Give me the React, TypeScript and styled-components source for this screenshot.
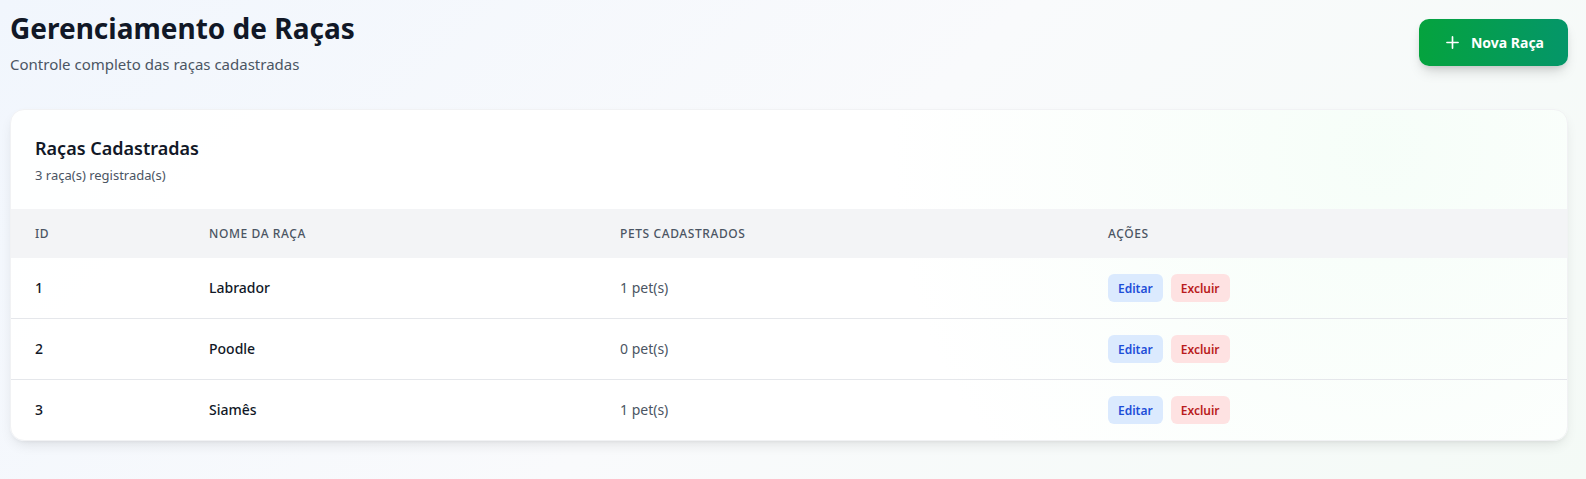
import React from "react";
import styled, { createGlobalStyle } from "styled-components";

const GlobalStyle = createGlobalStyle`
  * { box-sizing: border-box; }
  html, body { margin: 0; padding: 0; }
  body {
    font-family: "Noto Sans", "Open Sans", Arial, sans-serif;
    background: linear-gradient(135deg, #f1f6fd 0%, #f9fafc 50%, #f4faf6 100%);
    min-height: 479px;
    color: #111827;
  }
`;

const Page = styled.div`
  padding: 10px 18px 20px 10px;
`;

const Header = styled.header`
  display: flex;
  justify-content: space-between;
  align-items: center;
  margin-bottom: 35px;
`;

const TitleBlock = styled.div`
  display: flex;
  flex-direction: column;
  gap: 8px;
`;

const Title = styled.h1`
  margin: 0;
  font-size: 28px;
  line-height: 36px;
  font-weight: 700;
  color: #111827;
`;

const Subtitle = styled.p`
  margin: 0;
  font-size: 15px;
  line-height: 20px;
  color: #4b5563;
`;

const PrimaryButton = styled.button`
  display: inline-flex;
  align-items: center;
  gap: 12px;
  height: 47px;
  padding: 0 24px 0 27px;
  border: none;
  border-radius: 10px;
  background: linear-gradient(90deg, #05a33e 0%, #059669 100%);
  color: #fff;
  font-family: inherit;
  font-size: 14px;
  font-weight: 700;
  box-shadow: 0 8px 14px -4px rgba(0, 0, 0, 0.18), 0 3px 6px -2px rgba(0, 0, 0, 0.1);
  cursor: pointer;
`;

const Card = styled.section`
  background: radial-gradient(circle at 88% 12%, rgba(240, 253, 244, 0.6) 0%, rgba(255, 255, 255, 0) 35%),
    rgba(255, 255, 255, 0.92);
  border: 1px solid #f1f2f4;
  border-radius: 14px;
  box-shadow: 0 6px 14px -4px rgba(0, 0, 0, 0.12), 0 2px 4px -2px rgba(0, 0, 0, 0.06);
  overflow: hidden;
`;

const CardHeader = styled.div`
  padding: 24px 24px 25px;
  border-bottom: 1px solid #f3f4f6;
`;

const CardTitle = styled.h2`
  margin: 0 0 4px;
  font-size: 18px;
  line-height: 28px;
  font-weight: 600;
  color: #111827;
`;

const CardSubtitle = styled.p`
  margin: 0;
  font-size: 13px;
  line-height: 18px;
  color: #4b5563;
`;

const Row = styled.div<{ $head?: boolean; $last?: boolean }>`
  display: grid;
  grid-template-columns: 174px 411px 488px 1fr;
  align-items: center;
  padding: 0 24px;
  height: ${(p) => (p.$head ? "48px" : "60px")};
  background: ${(p) => (p.$head ? "#f3f4f6" : "transparent")};
  border-bottom: ${(p) => (p.$head || p.$last ? "none" : "1px solid #e5e7eb")};
  box-sizing: content-box;
`;

const HeadCell = styled.div`
  font-size: 12px;
  line-height: 16px;
  font-weight: 500;
  text-transform: uppercase;
  letter-spacing: 0.05em;
  color: #4b5563;
`;

const Cell = styled.div<{ $strong?: boolean; $muted?: boolean }>`
  font-size: 14px;
  line-height: 20px;
  font-weight: ${(p) => (p.$strong ? 500 : 400)};
  color: ${(p) => (p.$muted ? "#4b5563" : "#111827")};
`;

const Actions = styled.div`
  display: flex;
  gap: 8px;
`;

const ActionButton = styled.button<{ $variant: "edit" | "delete" }>`
  height: 28px;
  padding: 0 10px;
  border: none;
  border-radius: 6px;
  font-family: inherit;
  font-size: 12px;
  font-weight: 600;
  background: ${(p) => (p.$variant === "edit" ? "#dbeafe" : "#fee2e2")};
  color: ${(p) => (p.$variant === "edit" ? "#1d4ed8" : "#b91c1c")};
  cursor: pointer;
`;

const breeds = [
  { id: 1, name: "Labrador", pets: 1 },
  { id: 2, name: "Poodle", pets: 0 },
  { id: 3, name: "Siamês", pets: 1 },
];

export default function App() {
  return (
    <>
      <GlobalStyle />
      <Page>
        <Header>
          <TitleBlock>
            <Title>Gerenciamento de Raças</Title>
            <Subtitle>Controle completo das raças cadastradas</Subtitle>
          </TitleBlock>
          <PrimaryButton>
            <svg width="13" height="13" viewBox="0 0 14 14" fill="none" stroke="#fff" strokeWidth="1.8" strokeLinecap="round">
              <path d="M7 1v12M1 7h12" />
            </svg>
            Nova Raça
          </PrimaryButton>
        </Header>
        <Card>
          <CardHeader>
            <CardTitle>Raças Cadastradas</CardTitle>
            <CardSubtitle>3 raça(s) registrada(s)</CardSubtitle>
          </CardHeader>
          <Row $head>
            <HeadCell>ID</HeadCell>
            <HeadCell>Nome da Raça</HeadCell>
            <HeadCell>Pets Cadastrados</HeadCell>
            <HeadCell>Ações</HeadCell>
          </Row>
          {breeds.map((b, i) => (
            <Row key={b.id} $last={i === breeds.length - 1}>
              <Cell $strong>{b.id}</Cell>
              <Cell $strong>{b.name}</Cell>
              <Cell $muted>{b.pets} pet(s)</Cell>
              <Actions>
                <ActionButton $variant="edit">Editar</ActionButton>
                <ActionButton $variant="delete">Excluir</ActionButton>
              </Actions>
            </Row>
          ))}
        </Card>
      </Page>
    </>
  );
}
